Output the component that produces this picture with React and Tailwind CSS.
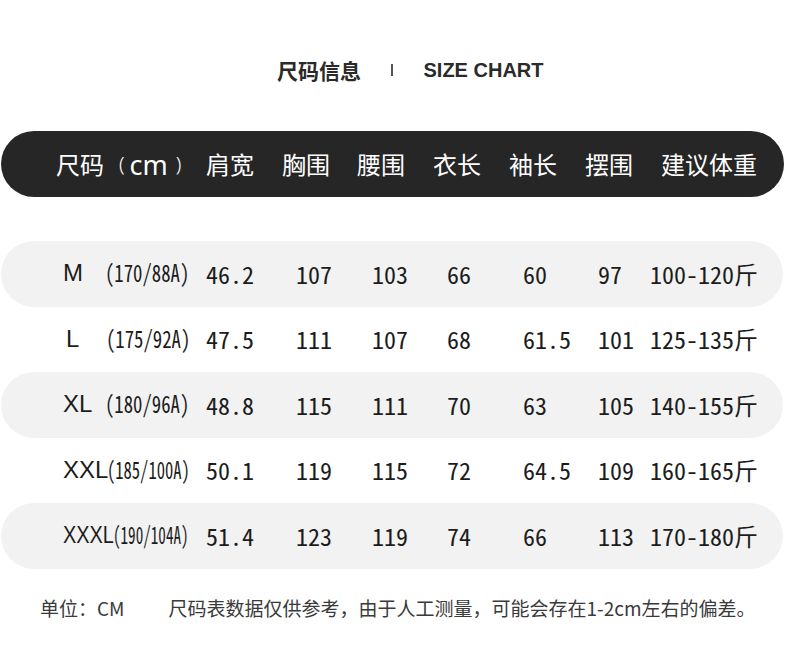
const rows = [
  { size: "M", sizeCls: "", paren: "(170/88A)", pw: "w-[85px]", ps: "scale-x-[0.78]", v: ["46.2", "107", "103", "66", "60", "97", "100-120斤"], gray: true },
  { size: "L", sizeCls: "ml-[3px]", paren: "(175/92A)", pw: "w-[84px]", ps: "scale-x-[0.78]", v: ["47.5", "111", "107", "68", "61.5", "101", "125-135斤"], gray: false },
  { size: "XL", sizeCls: "", paren: "(180/96A)", pw: "w-[85px]", ps: "scale-x-[0.78]", v: ["48.8", "115", "111", "70", "63", "105", "140-155斤"], gray: true },
  { size: "XXL", sizeCls: "", paren: "(185/100A)", pw: "w-[83px]", ps: "scale-x-[0.69]", v: ["50.1", "119", "115", "72", "64.5", "109", "160-165斤"], gray: false },
  { size: "XXXL", sizeCls: "scale-x-[0.83]", paren: "(190/104A)", pw: "w-[77px]", ps: "scale-x-[0.63]", v: ["51.4", "123", "119", "74", "66", "113", "170-180斤"], gray: true },
];

const headers = ["肩宽", "胸围", "腰围", "衣长", "袖长", "摆围", "建议体重"];

const mono = { fontFamily: '"Noto Sans Mono CJK SC", "Noto Sans CJK SC", "DejaVu Sans Mono", monospace' };

export default function App() {
  return (
    <div className="w-[790px] h-[659px] bg-white overflow-hidden" style={{ fontFamily: '"Noto Sans CJK SC", "Noto Sans", sans-serif' }}>
      <div className="h-[131px] pt-[58px]">
        <div className="flex items-center h-[24px] pl-[277px] text-[#2a2a2a]">
          <span className="text-[21px] font-bold leading-none">尺码信息</span>
          <span className="ml-[30px] w-[1.5px] h-[12px] bg-[#555]"></span>
          <span className="ml-[31px] text-[20px] font-bold leading-none" style={{ fontFamily: '"Liberation Sans", Arial, sans-serif' }}>SIZE CHART</span>
        </div>
      </div>

      <div className="ml-[1px] w-[783px] h-[66px] rounded-full bg-[#262626] text-white grid grid-cols-[150px_76px_75px_76px_76px_76px_76px_1fr] items-center pl-[55px] text-[24px] leading-none">
        <div className="flex items-center whitespace-nowrap">
          <span>尺码</span>
          <span className="ml-[15px] text-[20px] font-light" style={{ fontFamily: '"Noto Sans", sans-serif' }}>(</span>
          <span className="ml-[5px] text-[27px]" style={{ fontFamily: '"Noto Sans", sans-serif' }}>cm</span>
          <span className="ml-[8px] text-[20px] font-light" style={{ fontFamily: '"Noto Sans", sans-serif' }}>)</span>
        </div>
        {headers.map((h) => (
          <div key={h} className="whitespace-nowrap">{h}</div>
        ))}
      </div>

      <div className="mt-[44px] ml-[1px] w-[782px] flex flex-col text-[#1c1c1c]">
        {rows.map((r) => (
          <div key={r.size} className={`h-[65.5px] rounded-full grid grid-cols-[205px_90px_76px_75px_76px_75px_52px_1fr] items-center ${r.gray ? "bg-[#f2f2f2]" : ""}`}>
            <div className="flex items-center pl-[62px] pr-[16px]">
              <span className="w-[40px] shrink-0 whitespace-nowrap">
                <span className={`inline-block origin-left text-[24px] leading-none whitespace-nowrap ${r.sizeCls}`} style={{ fontFamily: '"Liberation Sans", Arial, sans-serif' }}>{r.size}</span>
              </span>
              <span className={`ml-auto shrink-0 ${r.pw} whitespace-nowrap`}>
                <span className={`inline-block origin-left text-[24px] leading-none ${r.ps}`} style={mono}>{r.paren}</span>
              </span>
            </div>
            {r.v.map((val, i) => (
              <div key={i} className="text-[24px] leading-none whitespace-nowrap" style={mono}>{val}</div>
            ))}
          </div>
        ))}
      </div>

      <div className="mt-[27px] flex items-center h-[24px] text-[19px] text-[#3a3a3a] leading-none whitespace-nowrap">
        <span className="ml-[40px]">单位：CM</span>
        <span className="ml-[44px]">尺码表数据仅供参考，由于人工测量，可能会存在1-2cm左右的偏差。</span>
      </div>
    </div>
  );
}
